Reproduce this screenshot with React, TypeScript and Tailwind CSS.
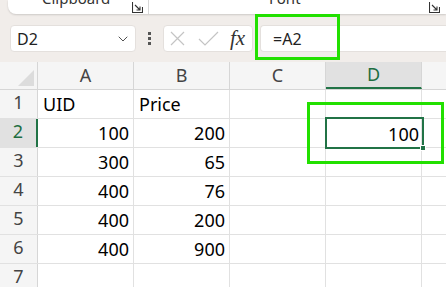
import React from 'react'
import { ChevronDown } from 'lucide-react'

const cols = ['A', 'B', 'C', 'D']
const rows: (string | number)[][] = [
  ['UID', 'Price', '', ''],
  [100, 200, '', ''],
  [300, 65, '', ''],
  [400, 76, '', ''],
  [400, 200, '', ''],
  [400, 900, '', ''],
  ['', '', '', ''],
]

function Launcher() {
  return (
    <svg width="11" height="11" viewBox="0 0 11 11" fill="none" stroke="#333" strokeWidth="1.1">
      <path d="M0.5 0 V10.5 H10.5 V5" />
      <path d="M3 3 L8 8 M4.5 8 H8 V4.5" />
    </svg>
  )
}

export default function App() {
  const font = { fontFamily: '"Noto Sans", "Open Sans", sans-serif' }
  return (
    <div className="relative w-[446px] h-[287px] overflow-hidden bg-[#f1edea]" style={font}>
      {/* ribbon bottom */}
      <div className="ml-[8px] h-[14px] rounded-bl-[8px] bg-white shadow-[0_1px_2px_rgba(0,0,0,0.15)] flex items-end overflow-hidden">
        <div className="flex items-end h-full">
          <span className="ml-[34px] w-[60px] text-[15px] leading-none text-[#333] translate-y-[-8px]">Clipboard</span>
          <div className="ml-[30px] mb-[1px]"><Launcher /></div>
          <div className="ml-[5px] w-px h-full bg-[#d8d8d8]" />
          <span className="ml-[120px] text-[15px] leading-none text-[#333] translate-y-[-8px]">Font</span>
          <div className="ml-[128px] mb-[1px]"><Launcher /></div>
        </div>
      </div>

      {/* formula bar */}
      <div className="flex items-center h-[27px] mt-[11px] pl-[10px]">
        <div className="w-[126px] h-[27px] bg-white rounded-[4px] border border-[#e4e0dd] flex items-center justify-between pl-[6px] pr-[4px]">
          <span className="text-[16px] text-[#222]">D2</span>
          <ChevronDown size={16} strokeWidth={1.4} color="#444" />
        </div>
        <div className="w-[27px] flex flex-col items-center gap-[2px]">
          <div className="w-[3px] h-[3px] bg-[#555]" />
          <div className="w-[3px] h-[3px] bg-[#555]" />
          <div className="w-[3px] h-[3px] bg-[#555]" />
        </div>
        <div className="w-[90px] h-[27px] bg-white rounded-[4px] border border-[#e4e0dd] flex items-center pl-[6px]">
          <svg width="15" height="15" viewBox="0 0 15 15" stroke="#c4c4c4" strokeWidth="1.2" fill="none">
            <path d="M1 1 L14 14 M14 1 L1 14" />
          </svg>
          <svg className="ml-[13px]" width="21" height="15" viewBox="0 0 21 15" stroke="#c4c4c4" strokeWidth="1.2" fill="none">
            <path d="M1 8 L7 14 L20 1" />
          </svg>
          <span className="ml-[11px] text-[21px] italic leading-none text-[#333]" style={{ fontFamily: '"Liberation Serif", serif' }}>fx</span>
        </div>
        <div className="ml-[7px] flex-1 h-[27px] bg-white rounded-l-[4px] border border-r-0 border-[#e4e0dd] flex items-center pl-[12px]">
          <span className="text-[16px] text-[#222]">=A2</span>
        </div>
      </div>

      {/* grid */}
      <div className="mt-[10px] bg-white">
        <div className="flex h-[28px] bg-[#f5f5f5] border-b border-[#d6d6d6]">
          <div className="w-[38px] shrink-0 border-r border-[#d6d6d6] relative">
            <svg className="absolute right-[3px] bottom-[3px]" width="16" height="16" viewBox="0 0 16 16">
              <path d="M16 0 V16 H0 Z" fill="#dcdcdc" />
            </svg>
          </div>
          {cols.map((c) => (
            <div
              key={c}
              className={
                c === 'D'
                  ? 'w-[96px] shrink-0 border-r border-[#d6d6d6] bg-[#e1e1e1] border-b-2 border-b-[#217346] text-[#1e6e41] flex items-center justify-center text-[18px]'
                  : 'w-[96px] shrink-0 border-r border-[#d6d6d6] text-[#444] flex items-center justify-center text-[18px]'
              }
            >
              {c}
            </div>
          ))}
          <div className="flex-1" />
        </div>
        {rows.map((r, i) => (
          <div key={i} className="flex h-[29px] border-b border-[#e1e1e1]">
            <div
              className={
                i === 1
                  ? 'w-[38px] shrink-0 bg-[#e1e1e1] border-r-2 border-[#217346] text-[#1e6e41] flex items-end justify-center pb-[2px] text-[18px]'
                  : 'w-[38px] shrink-0 bg-[#f5f5f5] border-r border-[#d6d6d6] text-[#444] flex items-end justify-center pb-[2px] text-[18px]'
              }
            >
              {i + 1}
            </div>
            {r.map((v, j) => (
              <div
                key={j}
                className={
                  typeof v === 'number'
                    ? 'w-[96px] shrink-0 border-r border-[#e1e1e1] flex items-end justify-end pr-[4px] pb-[2px] text-[18px] leading-[24px] text-black'
                    : 'w-[96px] shrink-0 border-r border-[#e1e1e1] flex items-end pl-[5px] pb-[2px] text-[18px] leading-[24px] text-black'
                }
              >
                {i === 1 && j === 3 ? '' : v}
              </div>
            ))}
            <div className="flex-1" />
          </div>
        ))}
      </div>

      {/* selected cell D2 */}
      <div className="absolute left-[325px] top-[117px] w-[99px] h-[32px] border-2 border-[#217346] flex items-end justify-end pr-[3px] pb-[1px] text-[18px] leading-[24px] text-black">
        100
        <div className="absolute right-[-4px] bottom-[-4px] w-[6px] h-[6px] bg-[#217346] border border-white" />
      </div>

      {/* annotation highlights */}
      <div className="absolute left-[255px] top-[14px] w-[85px] h-[46px] border-[3px] border-[#22e000]" />
      <div className="absolute left-[307px] top-[102px] w-[137px] h-[62px] border-[3px] border-[#22e000]" />
    </div>
  )
}
